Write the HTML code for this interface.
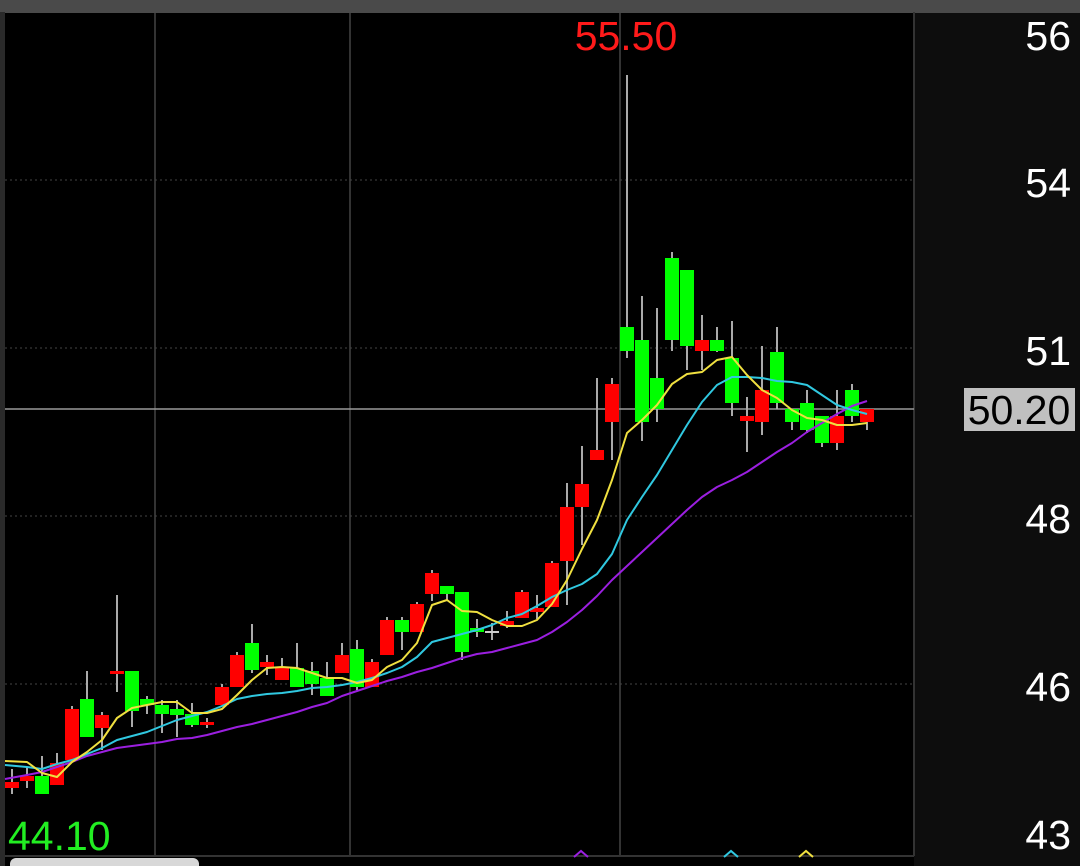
<!DOCTYPE html>
<html><head><meta charset="utf-8"><style>
html,body{margin:0;padding:0;background:#000;width:1080px;height:866px;overflow:hidden}
svg{display:block}
text{font-family:"Liberation Sans",sans-serif}
</style></head><body>
<svg width="1080" height="866" viewBox="0 0 1080 866" xmlns="http://www.w3.org/2000/svg">
<rect width="1080" height="866" fill="#000"/>
<rect x="914" y="12" width="166" height="854" fill="#0d0d0d"/>
<rect x="0" y="0" width="1080" height="13" fill="#4a4a4a"/>
<rect x="0" y="12" width="5" height="854" fill="#2a2a2a"/>
<line x1="914" y1="12" x2="914" y2="856" stroke="#333" stroke-width="2"/>
<line x1="5" y1="856" x2="914" y2="856" stroke="#333" stroke-width="2"/>
<g stroke="#333" stroke-width="2">
<line x1="155" y1="13" x2="155" y2="856"/><line x1="350" y1="13" x2="350" y2="856"/><line x1="620" y1="13" x2="620" y2="856"/>
</g>
<g stroke="#444" stroke-width="1" stroke-dasharray="2,3">
<line x1="5" y1="180" x2="914" y2="180"/><line x1="5" y1="348" x2="914" y2="348"/><line x1="5" y1="516" x2="914" y2="516"/><line x1="5" y1="684" x2="914" y2="684"/>
</g>
<line x1="5" y1="409" x2="914" y2="409" stroke="#999" stroke-width="1.5"/>
<g stroke="#aaa" stroke-width="2">
<line x1="12" y1="769" x2="12" y2="794"/><line x1="27" y1="767" x2="27" y2="788"/><line x1="42" y1="756" x2="42" y2="794"/><line x1="57" y1="753" x2="57" y2="785"/><line x1="72" y1="706" x2="72" y2="760"/><line x1="87" y1="671" x2="87" y2="737"/><line x1="102" y1="712" x2="102" y2="750"/><line x1="117" y1="595" x2="117" y2="692"/><line x1="132" y1="671" x2="132" y2="727"/><line x1="147" y1="696" x2="147" y2="714"/><line x1="162" y1="700" x2="162" y2="733"/><line x1="177" y1="700" x2="177" y2="737"/><line x1="192" y1="703" x2="192" y2="727"/><line x1="207" y1="718" x2="207" y2="728"/><line x1="222" y1="684" x2="222" y2="705"/><line x1="237" y1="652" x2="237" y2="687"/><line x1="252" y1="624" x2="252" y2="673"/><line x1="267" y1="655" x2="267" y2="675"/><line x1="282" y1="658" x2="282" y2="680"/><line x1="297" y1="643" x2="297" y2="687"/><line x1="312" y1="662" x2="312" y2="695"/><line x1="327" y1="662" x2="327" y2="696"/><line x1="342" y1="643" x2="342" y2="673"/><line x1="357" y1="640" x2="357" y2="690"/><line x1="372" y1="659" x2="372" y2="687"/><line x1="387" y1="617" x2="387" y2="655"/><line x1="402" y1="617" x2="402" y2="650"/><line x1="417" y1="602" x2="417" y2="632"/><line x1="432" y1="570" x2="432" y2="601"/><line x1="447" y1="586" x2="447" y2="601"/><line x1="462" y1="592" x2="462" y2="660"/><line x1="477" y1="619" x2="477" y2="637"/><line x1="492" y1="623" x2="492" y2="640"/><line x1="507" y1="611" x2="507" y2="628"/><line x1="522" y1="590" x2="522" y2="618"/><line x1="537" y1="595" x2="537" y2="619"/><line x1="552" y1="561" x2="552" y2="607"/><line x1="567" y1="483" x2="567" y2="605"/><line x1="582" y1="446" x2="582" y2="545"/><line x1="597" y1="378" x2="597" y2="460"/><line x1="612" y1="378" x2="612" y2="460"/><line x1="627" y1="75" x2="627" y2="358"/><line x1="642" y1="296" x2="642" y2="441"/><line x1="657" y1="308" x2="657" y2="422"/><line x1="672" y1="252" x2="672" y2="351"/><line x1="687" y1="270" x2="687" y2="370"/><line x1="702" y1="315" x2="702" y2="370"/><line x1="717" y1="327" x2="717" y2="352"/><line x1="732" y1="321" x2="732" y2="416"/><line x1="747" y1="397" x2="747" y2="452"/><line x1="762" y1="346" x2="762" y2="435"/><line x1="777" y1="327" x2="777" y2="409"/><line x1="792" y1="409" x2="792" y2="430"/><line x1="807" y1="390" x2="807" y2="433"/><line x1="822" y1="416" x2="822" y2="447"/><line x1="837" y1="390" x2="837" y2="450"/><line x1="852" y1="384" x2="852" y2="422"/><line x1="867" y1="409" x2="867" y2="430"/>
</g>
<g fill="#ff0000">
<rect x="5" y="782" width="14" height="6"/><rect x="20" y="776" width="14" height="5"/><rect x="50" y="763" width="14" height="22"/><rect x="65" y="709" width="14" height="51"/><rect x="95" y="715" width="14" height="13"/><rect x="110" y="671" width="14" height="3"/><rect x="200" y="722" width="14" height="3"/><rect x="215" y="687" width="14" height="18"/><rect x="230" y="655" width="14" height="32"/><rect x="260" y="662" width="14" height="5"/><rect x="275" y="668" width="14" height="12"/><rect x="335" y="655" width="14" height="18"/><rect x="365" y="662" width="14" height="25"/><rect x="380" y="620" width="14" height="35"/><rect x="410" y="604" width="14" height="28"/><rect x="425" y="573" width="14" height="21"/><rect x="500" y="621" width="14" height="5"/><rect x="515" y="592" width="14" height="26"/><rect x="530" y="608" width="14" height="4"/><rect x="545" y="563" width="14" height="44"/><rect x="560" y="507" width="14" height="54"/><rect x="575" y="484" width="14" height="23"/><rect x="590" y="450" width="14" height="10"/><rect x="605" y="384" width="14" height="38"/><rect x="695" y="340" width="14" height="11"/><rect x="740" y="416" width="14" height="5"/><rect x="755" y="390" width="14" height="32"/><rect x="830" y="416" width="14" height="27"/><rect x="860" y="409" width="14" height="13"/>
</g>
<g fill="#00ff00">
<rect x="35" y="776" width="14" height="18"/><rect x="80" y="699" width="14" height="38"/><rect x="125" y="671" width="14" height="40"/><rect x="140" y="699" width="14" height="6"/><rect x="155" y="705" width="14" height="9"/><rect x="170" y="709" width="14" height="6"/><rect x="185" y="714" width="14" height="11"/><rect x="245" y="643" width="14" height="27"/><rect x="290" y="668" width="14" height="19"/><rect x="305" y="671" width="14" height="13"/><rect x="320" y="678" width="14" height="18"/><rect x="350" y="649" width="14" height="38"/><rect x="395" y="620" width="14" height="12"/><rect x="440" y="586" width="14" height="8"/><rect x="455" y="592" width="14" height="60"/><rect x="470" y="628" width="14" height="4"/><rect x="485" y="631" width="14" height="2" fill="#ccc"/><rect x="620" y="327" width="14" height="24"/><rect x="635" y="340" width="14" height="82"/><rect x="650" y="378" width="14" height="31"/><rect x="665" y="258" width="14" height="82"/><rect x="680" y="270" width="14" height="76"/><rect x="710" y="340" width="14" height="11"/><rect x="725" y="358" width="14" height="45"/><rect x="770" y="352" width="14" height="51"/><rect x="785" y="409" width="14" height="13"/><rect x="800" y="403" width="14" height="27"/><rect x="815" y="416" width="14" height="27"/><rect x="845" y="390" width="14" height="26"/>
</g>
<g fill="none" stroke-width="2" stroke-linejoin="round">
<polyline stroke="#9b1fe0" points="5,779 27,775 42,772 57,767 72,762 87,756 102,752 117,748 132,746 147,744 162,742 177,739 192,738 207,735 222,731 237,727 252,724 267,720 282,716 297,712 312,707 327,703 342,696 357,691 372,686 387,681 402,677 417,672 432,668 447,663 462,658 477,654 492,652 507,648 522,644 537,640 552,632 567,622 582,610 597,596 612,580 627,566 642,552 657,538 672,524 687,510 702,497 717,487 732,480 747,472 762,462 777,452 792,443 807,432 822,423 837,414 852,406 867,401"/>
<polyline stroke="#30c8e0" points="5,765 27,767 42,769 57,764 72,760 87,754 102,748 117,740 132,736 147,732 162,726 177,720 192,716 207,712 222,706 237,699 252,696 267,694 282,693 297,691 312,688 327,687 342,685 357,682 372,678 387,673 402,667 417,657 432,642 447,638 462,634 477,630 492,625 507,618 522,614 537,606 552,597 567,590 582,584 597,574 612,554 627,520 642,497 657,475 672,450 687,425 702,402 717,385 732,377 747,377 762,378 777,381 792,382 807,385 822,395 837,405 852,410 867,414"/>
<polyline stroke="#f0e040" points="5,761 27,762 42,773 57,777 72,762 87,752 102,740 117,718 132,708 147,705 162,702 177,702 192,713 207,713 222,709 237,695 252,680 267,668 282,667 297,668 312,673 327,678 342,678 357,683 372,680 387,667 402,660 417,643 432,605 447,600 462,611 477,612 492,620 507,626 522,626 537,620 552,604 567,580 582,549 597,520 612,480 627,433 642,420 657,405 672,384 687,374 702,372 717,360 732,357 747,375 762,390 777,398 792,410 807,418 822,420 837,425 852,425 867,423"/>
</g>
<g fill="none" stroke-width="2">
<polyline stroke="#9b1fe0" points="574,857 581,851 588,857"/>
<polyline stroke="#30c8e0" points="724,857 731,851 738,857"/>
<polyline stroke="#f0e040" points="799,857 806,851 813,857"/>
</g>
<rect x="10" y="858" width="189" height="14" rx="6" fill="#d8d8d8"/>
<text x="626" y="50" font-size="41" fill="#ff1a1a" text-anchor="middle">55.50</text>
<text x="8" y="850" font-size="41" fill="#22ee22">44.10</text>
<g font-size="41" fill="#fff" text-anchor="end">
<text x="1071" y="50">56</text><text x="1071" y="197">54</text><text x="1071" y="365">51</text><text x="1071" y="533">48</text><text x="1071" y="701">46</text><text x="1071" y="849">43</text>
</g>
<rect x="964" y="388" width="111" height="43" fill="#c0c0c0"/>
<text x="1019" y="424" font-size="41" fill="#000" text-anchor="middle">50.20</text>
</svg>
</body></html>
